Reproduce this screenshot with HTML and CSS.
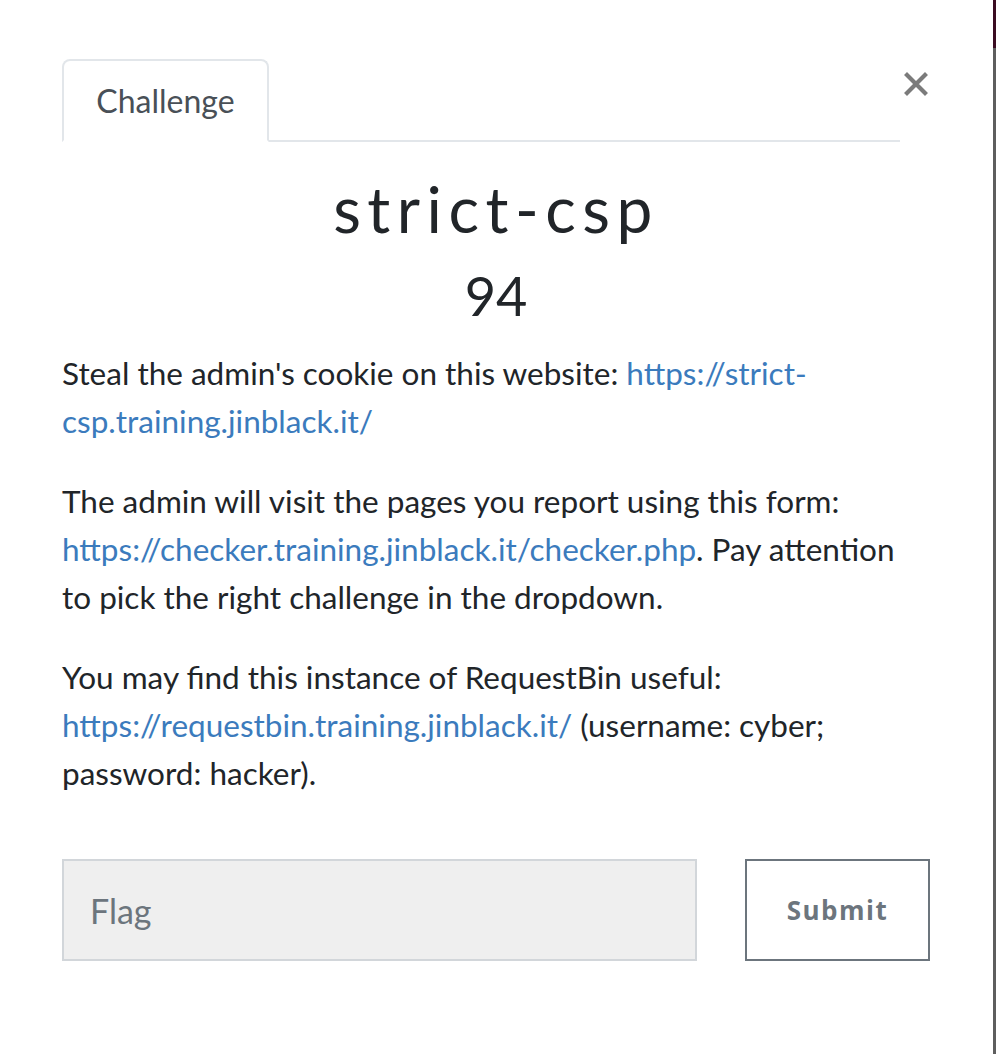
FILE: index.html
```html
<!DOCTYPE html>
<html>
<head>
<meta charset="utf-8">
<link rel="stylesheet" href="styles.css">
</head>
<body>
<div class="page">
  <div class="modal">
    <div class="header">
      <ul class="tabs">
        <li class="tab">Challenge</li>
      </ul>
      <button class="close" aria-label="Close">
        <svg width="24" height="24" viewBox="0 0 24 24"><path d="M3 3 L21 21 M21 3 L3 21" stroke="#7b7b7b" stroke-width="4.2" stroke-linecap="square"/></svg>
      </button>
    </div>
    <h1 class="title">strict-csp</h1>
    <h2 class="points">94</h2>
    <div class="desc">
      <p>Steal the admin's cookie on this website: <a href="#">https://strict-csp.training.jinblack.it/</a></p>
      <p>The admin will visit the pages you report using this form: <a href="#">https://checker.training.jinblack.it/checker.php</a>. Pay attention to pick the right challenge in the dropdown.</p>
      <p>You may find this instance of RequestBin useful: <a href="#">https://requestbin.training.jinblack.it/</a> (username: cyber; password: hacker).</p>
    </div>
    <form class="submit-row">
      <input class="flag" type="text" placeholder="Flag">
      <button class="submit" type="button">Submit</button>
    </form>
  </div>
  <div class="edge"><div class="edge-top"></div><div class="edge-rest"></div></div>
</div>
</body>
</html>
```
FILE: styles.css
```css
html, body {
  margin: 0;
  padding: 0;
  background: #fff;
}
.page {
  display: flex;
  height: 1054px;
  overflow: hidden;
}
.modal {
  flex: 1;
  padding: 59px 63px 0 62px;
  font-family: Lato, "Liberation Sans", sans-serif;
  color: #212529;
}
.edge {
  width: 3px;
  display: flex;
  flex-direction: column;
}
.edge-top { height: 48px; background: #3b0c22; }
.edge-rest { flex: 1; background: #5e5e5e; }
.header {
  display: flex;
}
.tabs {
  flex: 1;
  list-style: none;
  margin: 0 3px 0 0;
  padding: 0;
  display: flex;
  border-bottom: 2px solid #e2e6ea;
}
.tab {
  width: 203px;
  height: 79px;
  box-sizing: content-box;
  border: 2px solid #e2e6ea;
  border-bottom: 2px solid #fff;
  margin-bottom: -2px;
  border-radius: 8px 8px 0 0;
  font-size: 32px;
  color: #495057;
  display: flex;
  align-items: center;
  justify-content: center;
}
.close {
  width: 25px;
  height: 25px;
  padding: 0;
  margin: 12px 2px 0 0;
  border: 0;
  background: none;
  display: flex;
  align-items: center;
  justify-content: center;
}
.title {
  margin: 28px 0 0;
  text-align: center;
  font-family: Lato, sans-serif;
  font-weight: 400;
  font-size: 64px;
  letter-spacing: 6.5px;
  line-height: 78px;
  color: #212529;
}
.points {
  margin: 16px 0 0;
  text-align: center;
  font-weight: 400;
  font-size: 54px;
  line-height: 64px;
}
.desc {
  margin-top: 21px;
  font-size: 31.5px;
  line-height: 48px;
}
.desc p { margin: 0 0 32px; }
.desc a { color: #3b7bbd; text-decoration: none; }
.submit-row {
  margin-top: 62px;
  display: flex;
  gap: 48px;
}
.flag {
  width: 635px;
  height: 102px;
  box-sizing: border-box;
  background: #efefef;
  border: 2px solid #d2d6da;
  padding: 0 26px;
  font-family: Lato, sans-serif;
  font-size: 34px;
  color: #495057;
  outline: none;
}
.flag::placeholder { color: #6c757d; }
.submit {
  width: 185px;
  height: 102px;
  box-sizing: border-box;
  background: #fff;
  border: 2px solid #6c757d;
  color: #6c757d;
  font-family: "Open Sans", sans-serif;
  font-weight: 700;
  font-size: 26px;
  letter-spacing: 1.5px;
}
```
